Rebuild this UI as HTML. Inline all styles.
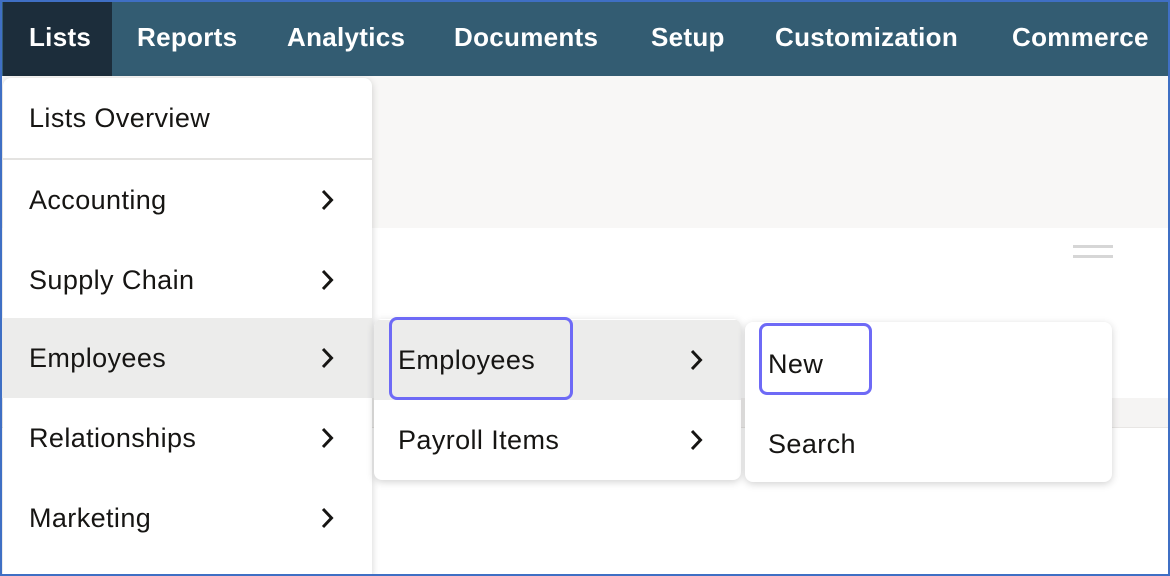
<!DOCTYPE html>
<html><head><style>
*{margin:0;padding:0;box-sizing:border-box}
html,body{width:1170px;height:576px;overflow:hidden}
body{background:#fff;font-family:"Liberation Sans",sans-serif;position:relative}
.frame{position:absolute;left:0;top:0;width:1170px;height:576px;border:2px solid #3f6fc4;z-index:50;pointer-events:none}
.nav{position:absolute;left:0;top:0;width:1170px;height:76px;background:#335c72}
.nav span{position:absolute;top:22px;color:#fff;font-size:26px;font-weight:bold;letter-spacing:0.3px;white-space:nowrap}
.lists{position:absolute;left:3px;top:2px;width:109px;height:74px;background:#1c2d3b}
.bg1{position:absolute;left:0;top:76px;width:1170px;height:152px;background:#f8f7f6}
.bg2{position:absolute;left:0;top:398px;width:1170px;height:30px;background:#f5f4f3;border-bottom:1px solid #e8e6e4}
.ham{position:absolute;left:1073px;width:40px;height:3px;background:#d6d6d6}
.menu{position:absolute;background:#fff;border-radius:8px;box-shadow:0 2px 8px rgba(0,0,0,.18);overflow:hidden}
.row{position:absolute;left:0;right:0;height:80px;font-size:27px;letter-spacing:0.4px;color:#161513;line-height:80px;padding-left:26px;white-space:nowrap}
.row.hl{background:#ececeb}
.chev{position:absolute;top:29px;width:13px;height:22px}
.focus{position:absolute;border:3px solid #6e6af6;border-radius:8px}
</style></head><body>
<div class="nav">
<div class="lists"></div>
<span style="left:29px">Lists</span>
<span style="left:137px">Reports</span>
<span style="left:287px">Analytics</span>
<span style="left:454px">Documents</span>
<span style="left:651px">Setup</span>
<span style="left:775px">Customization</span>
<span style="left:1012px">Commerce</span>
</div>
<div class="bg1"></div>
<div class="bg2"></div>
<div class="ham" style="top:245px"></div><div class="ham" style="top:255px"></div>

<div class="menu" style="left:3px;top:78px;width:369px;height:498px;border-radius:8px 8px 0 0">
<div class="row" style="top:0;height:80px">Lists Overview</div>
<div style="position:absolute;left:0;right:0;top:80px;height:2px;background:#e4e3e1"></div>
<div class="row" style="top:82px">Accounting<svg class="chev" style="left:318px" viewBox="0 0 13 22"><path d="M2 2l8.5 9-8.5 9" fill="none" stroke="#161513" stroke-width="3"/></svg></div>
<div class="row" style="top:162px">Supply Chain<svg class="chev" style="left:318px" viewBox="0 0 13 22"><path d="M2 2l8.5 9-8.5 9" fill="none" stroke="#161513" stroke-width="3"/></svg></div>
<div class="row hl" style="top:240px">Employees<svg class="chev" style="left:318px" viewBox="0 0 13 22"><path d="M2 2l8.5 9-8.5 9" fill="none" stroke="#161513" stroke-width="3"/></svg></div>
<div class="row" style="top:320px">Relationships<svg class="chev" style="left:318px" viewBox="0 0 13 22"><path d="M2 2l8.5 9-8.5 9" fill="none" stroke="#161513" stroke-width="3"/></svg></div>
<div class="row" style="top:400px">Marketing<svg class="chev" style="left:318px" viewBox="0 0 13 22"><path d="M2 2l8.5 9-8.5 9" fill="none" stroke="#161513" stroke-width="3"/></svg></div>
</div>

<div class="menu" style="left:374px;top:319px;width:367px;height:161px">
<div class="row hl" style="top:1px;padding-left:24px">Employees<svg class="chev" style="left:316px" viewBox="0 0 13 22"><path d="M2 2l8.5 9-8.5 9" fill="none" stroke="#161513" stroke-width="3"/></svg></div>
<div class="row" style="top:81px;padding-left:24px">Payroll Items<svg class="chev" style="left:316px" viewBox="0 0 13 22"><path d="M2 2l8.5 9-8.5 9" fill="none" stroke="#161513" stroke-width="3"/></svg></div>
</div>
<div class="focus" style="left:389px;top:317px;width:184px;height:83px"></div>

<div class="menu" style="left:745px;top:322px;width:367px;height:160px">
<div class="row" style="top:2px;padding-left:23px">New</div>
<div class="row" style="top:82px;padding-left:23px">Search</div>
</div>
<div class="focus" style="left:759px;top:323px;width:113px;height:72px"></div>
<div class="frame"></div>
</body></html>
